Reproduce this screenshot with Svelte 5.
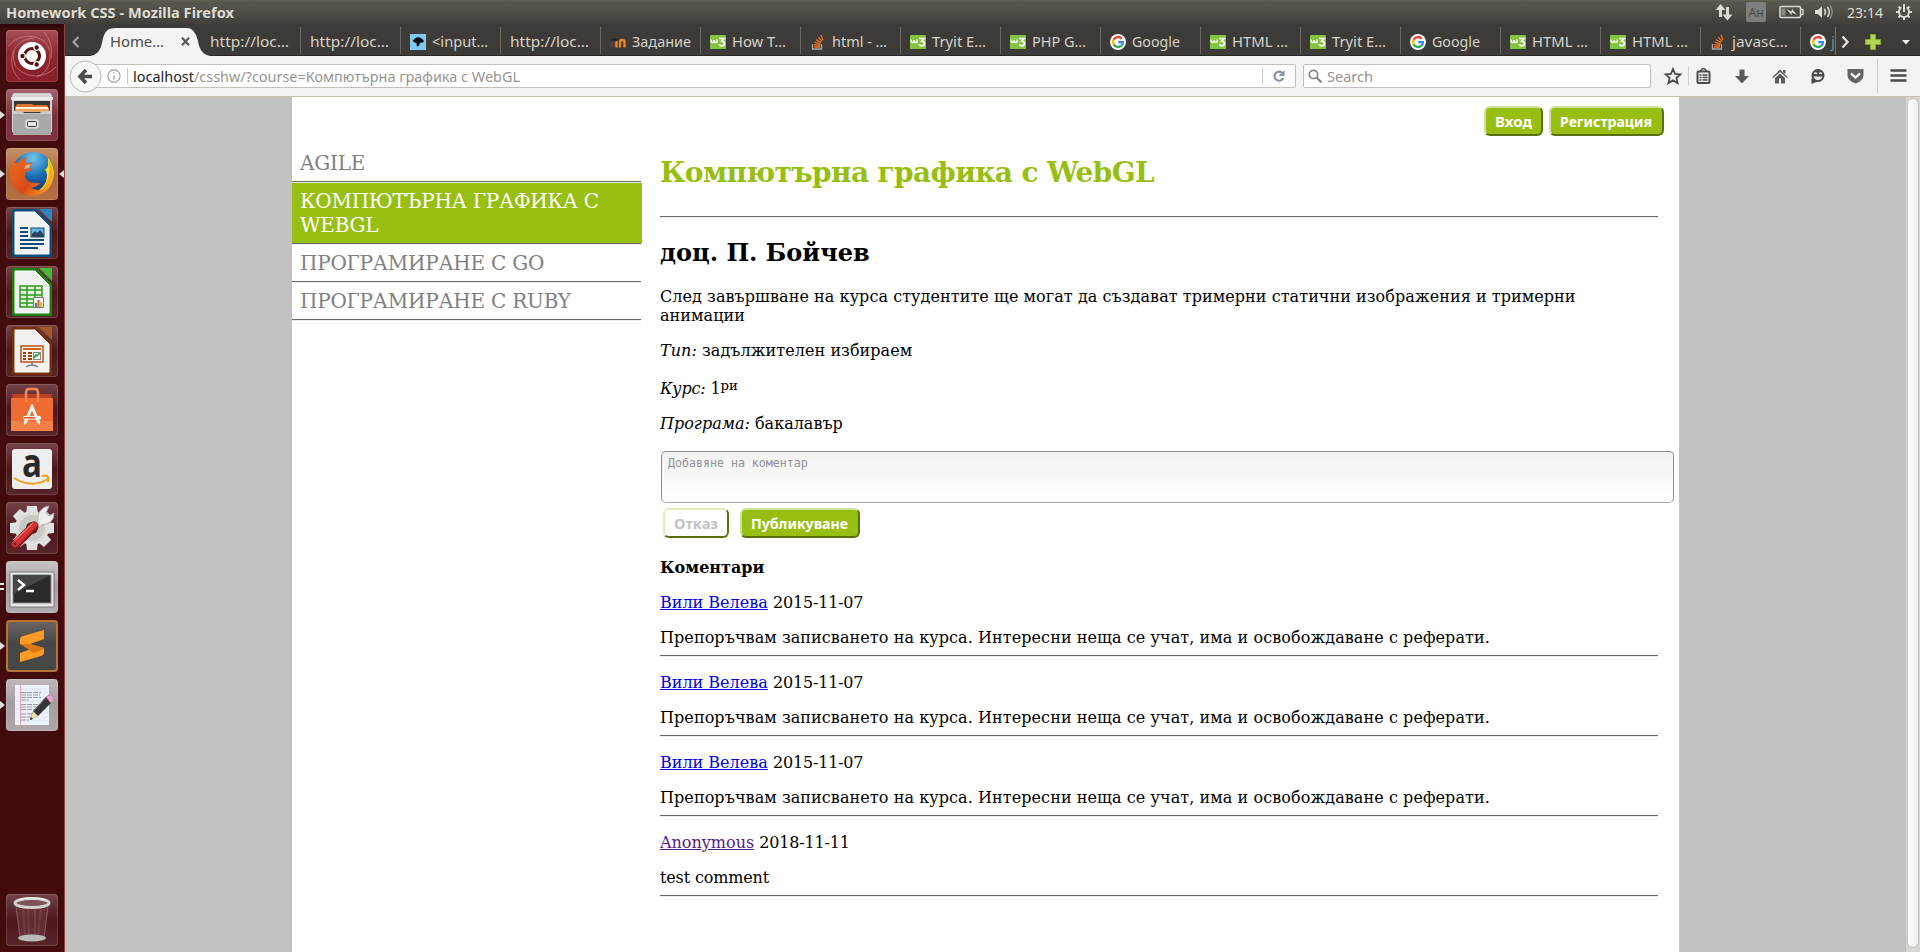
<script>
  const tabs = [
    { t: 'http://loc…', w: 79 },
    { t: 'http://loc…', w: 79 },
    { t: '<input…', w: 56, i: 'input' },
    { t: 'http://loc…', w: 79 },
    { t: 'Задание', w: 59, i: 'moodle' },
    { t: 'How T…', w: 54, i: 'w3' },
    { t: 'html - …', w: 55, i: 'so' },
    { t: 'Tryit E…', w: 54, i: 'w3' },
    { t: 'PHP G…', w: 54, i: 'w3' },
    { t: 'Google', w: 48, i: 'google' },
    { t: 'HTML …', w: 56, i: 'w3' },
    { t: 'Tryit E…', w: 54, i: 'w3' },
    { t: 'Google', w: 48, i: 'google' },
    { t: 'HTML …', w: 56, i: 'w3' },
    { t: 'HTML …', w: 56, i: 'w3' },
    { t: 'javasc…', w: 56, i: 'so' }
  ];
  const apps = [
    { n: 'dash', bg: 'linear-gradient(#a55259,#8d2730 45%,#8a2029)' },
    { n: 'files', bg: 'linear-gradient(#a5646f,#7b2f3c 50%,#7c3340)', left: true },
    { n: 'firefox', bg: 'linear-gradient(#c59368,#a9693c 50%,#b4703f)', left: true, right: true },
    { n: 'writer' },
    { n: 'calc' },
    { n: 'impress' },
    { n: 'software' },
    { n: 'amazon' },
    { n: 'settings' },
    { n: 'terminal', bg: 'linear-gradient(#c9c5c7,#a39c9f 50%,#b3aeb0)', double: true },
    { n: 'sublime', bg: 'linear-gradient(#6d6661,#474747 45%,#474747)', ring: true, left: true },
    { n: 'gedit', bg: 'linear-gradient(#beb6b8,#a59c9f 50%,#b0a8ab)', left: true }
  ];
  const comments = [
    { a: 'Вили Велева', d: '2015-11-07', t: 'Препоръчвам записването на курса. Интересни неща се учат, има и освобождаване с реферати.' },
    { a: 'Вили Велева', d: '2015-11-07', t: 'Препоръчвам записването на курса. Интересни неща се учат, има и освобождаване с реферати.' },
    { a: 'Вили Велева', d: '2015-11-07', t: 'Препоръчвам записването на курса. Интересни неща се учат, има и освобождаване с реферати.' },
    { a: 'Anonymous', d: '2018-11-11', t: 'test comment', visited: true }
  ];
  const teeth = [0, 45, 90, 135, 180, 225, 270, 315];
</script>

{#snippet label(text, w, color, weight = 400, size = 14.5)}
  <svg class="label" width={w} height="20"><text x="0" y="15" textLength={w} lengthAdjust="spacingAndGlyphs" fill={color} font-weight={weight} font-size={size}>{text}</text></svg>
{/snippet}

{#snippet favicon(i)}
  <svg class="fav" width="16" height="16" viewBox="0 0 16 16">
    {#if i === 'w3'}
      <rect y="1" width="16" height="14" rx="1" fill="#84c341" />
      <path d="M1.200 5.500v1.700q0 1.400 1.500 1.400T4.200 7.200V6v1.200q0 1.400 1.500 1.400T7.200 7.200V5.500" fill="none" stroke="#fff" stroke-width="1.500" />
      <path d="M9.300 4.500h4.700l-2.200 2.700q2.600.1 2.600 2.400 0 2.300-2.500 2.300-1.700 0-2.600-1.400" fill="none" stroke="#fff" stroke-width="1.700" />
    {:else if i === 'google'}
      <circle cx="8" cy="8" r="8" fill="#fff" />
      <g fill="none" stroke-width="2.300">
        <path d="M11.700 4.600A5 5 0 0 0 3.600 5.700" stroke="#ea4335" />
        <path d="M3.600 5.700a5 5 0 0 0 0 4.700" stroke="#fbbc05" />
        <path d="M3.600 10.400a5 5 0 0 0 7.700 1.300" stroke="#34a853" />
        <path d="M11.300 11.700A5 5 0 0 0 12.900 8.200H8.200" stroke="#4285f4" />
      </g>
    {:else if i === 'so'}
      <path d="M2.500 10v5h9v-5" fill="none" stroke="#a5a7a9" stroke-width="1.300" />
      <g stroke="#ee721c" stroke-width="1.300"><path d="M4 13h6M4.100 10.700l6 .8M4.800 8.200l5.600 1.900M6.200 5.600l4.900 3.200M8.300 3.200l3.700 4.300M10.900.8l2 5.300" /></g>
    {:else if i === 'moodle'}
      <path d="M1.500 13V8M4.700 13V8" stroke="#5b4a40" stroke-width="2" /><path d="M0 6l5-2 4 1-4 2z" fill="#222" />
      <path d="M6.500 13.500V7M10 13.500V8.300Q10 6 12.200 6t2.300 2.300v5.200" fill="none" stroke="#f0842a" stroke-width="2.300" />
    {:else}
      <rect width="16" height="16" fill="#80caf2" />
      <path d="M2.500 7L5 4.500Q7 2.800 10 3.500l3.500 2.500q.8 2.200-1 2.700H10l-1 3-2.300 1V9.500z" fill="#0a0a0a" />
    {/if}
  </svg>
{/snippet}

{#snippet app(n)}
  <svg width="52" height="52" viewBox="0 0 52 52">
    {#if n === 'dash'}
      <g fill="none" stroke="#d8999d" stroke-opacity=".55"><path d="M2 16Q14 3 30 7q16 5 14 22-1 13-13 18M50 37Q38 49 22 45 4 39 8 21M14 50Q2 38 7 22 13 8 29 8M38 2q10 12 7 27" /></g>
      <circle cx="26" cy="27" r="14" fill="#761b22" /><circle cx="26" cy="26" r="14" fill="#fff" />
      <circle cx="26" cy="26" r="7.500" fill="none" stroke="#541216" stroke-width="3" />
      <g fill="#541216" stroke="#fff" stroke-width="1.200"><circle cx="16.500" cy="26" r="2.800" /><circle cx="30.700" cy="17.500" r="2.800" /><circle cx="30.700" cy="34.500" r="2.800" /></g>
    {:else if n === 'files'}
      <path d="M6 8q0-4 3-4h34q3 0 3 4v35H6z" fill="#d4d4d4" /><path d="M5 8h42v3H5z" fill="#eee" />
      <path d="M8 12h36v12H8z" fill="#353638" /><path d="M9 18l2-3h15l1 1h14l2 3v4H9z" fill="#dc742a" /><path d="M10 18h32v2H10z" fill="#fff2dc" /><path d="M9 20h34v3H9z" fill="#f0a55c" />
      <path d="M7 22h9l2 2h16l2-2h9v24H7z" fill="#a9a9a9" /><path d="M7 22h9l2 2h16l2-2h9v3H7z" fill="#c9c9c9" />
      <rect x="19.500" y="30.500" width="13" height="9" rx="2" fill="#ddd" stroke="#c8c8c8" /><rect x="21.500" y="32.500" width="9" height="5" rx="1" fill="#e6e6e6" stroke="#333" />
    {:else if n === 'firefox'}
      <defs><radialGradient id="sea" cx=".5" cy=".15" r=".85"><stop stop-color="#72c7ee" /><stop offset=".5" stop-color="#1a6eb5" /><stop offset="1" stop-color="#112c67" /></radialGradient><linearGradient id="fox" x1="0" y1="0" x2="1" y2="1"><stop stop-color="#ee6d1f" /><stop offset=".6" stop-color="#db4b19" /><stop offset="1" stop-color="#f7a321" /></linearGradient></defs>
      <circle cx="27" cy="25" r="21" fill="url(#sea)" />
      <path d="M42 10q10 13 3 26-6 12-22 11 18-6 18-20 0-3-2-6 4 1 3-11z" fill="#fde21f" />
      <path d="M43 12q2 16-4 25-3 6-13 9 15 2 20-12 3-11-3-22z" fill="#f8a51d" />
      <path d="M8 12q-7 11-3 21 5 14 20 15 11 0 17-8-9 4-17 0 6-1 9-5-9 0-12-2-5-4-2-9l5-2-1-3 3-5q-5 1-8 2 0-4 2-7-5 1-8 5l-4 1 0-4q-2 1-1 1z" fill="url(#fox)" />
      <path d="M20 17l5-1-2 4-5 1z" fill="#efb286" />
    {:else if n === 'writer' || n === 'calc' || n === 'impress'}
      {@const c = n === 'writer' ? '#0b4d7d' : n === 'calc' ? '#18820d' : '#743205'}
      {@const d = n === 'writer' ? '#2d86c0' : n === 'calc' ? '#47bb37' : '#a35a23'}
      <path d="M8 2h22l16 16v32H8q-2 0-2-2V4q0-2 2-2z" fill={c} /><path d="M33 2h13v13z" fill={d} />
      <path d="M9 5h20l14 14v28H9z" fill="#f1f1f1" stroke="#fff" />
      {#if n === 'writer'}
        <path d="M14 21h8M14 25h8M14 29h8M14 33h24M14 37h24M14 41h18" stroke={c} stroke-width="2" /><rect x="25" y="21" width="13" height="9" fill="#68b7de" stroke={c} /><path d="M26 30v-3l3-3 2 2 3-3 4 5v2z" fill="#24455b" />
      {:else if n === 'calc'}
        <path d="M14 20h22v21H14z" fill="#dff2d8" stroke="#2c9c1d" stroke-width="1.500" /><path d="M21 20v21M29 20v21M14 24h22M14 29h22M14 33h22M14 37h22" stroke="#2c9c1d" stroke-width="1.500" /><path d="M27.500 31.500h10v10h-10z" fill="#fff" stroke="#777" /><path d="M29 41v-4h2v4z" fill="#2c7fc0" /><path d="M31.500 41v-7h2v7z" fill="#e35c12" /><path d="M34 41v-5h2v5z" fill="#f2b71a" />
      {:else}
        <rect x="15" y="21" width="22" height="16" fill="#fff5ec" stroke="#b85119" stroke-width="1.500" /><path d="M17 24h18" stroke="#d16326" stroke-width="2" /><path d="M17 28h3M17 31h3M17 34h3M22 28h4M22 31h4M22 34h4" stroke="#944010" stroke-width="2" /><rect x="27.500" y="27.500" width="7" height="7" fill="#fff" stroke="#888" /><path d="M28 33l2-3 1 1 3-3" fill="none" stroke="#1c9e42" stroke-width="1.500" /><path d="M26 37v3M20 42q6-4 12 0" stroke="#777" stroke-width="1.500" fill="none" />
      {/if}
    {:else if n === 'software'}
      <path d="M6 10h40l-1 5H7z" fill="#bd421e" /><path d="M5 14h42v33H5z" fill="#ef6b31" /><path d="M5 37h42v10H5z" fill="#f38147" /><path d="M20 18V9q0-4 3-4h6q3 0 3 4v9" stroke="#f2875c" stroke-width="2.500" fill="none" />
      <path d="M19 39l7-16 7 16M19 39h-1M33 39h1" stroke="#fff" stroke-width="3" fill="none" /><rect x="17" y="32" width="18" height="3.500" rx="1.500" fill="#fff" /><path d="M18 33.800h11" stroke="#e95420" stroke-width="1.500" />
    {:else if n === 'amazon'}
      <rect x="6" y="6" width="40" height="40" rx="3" fill="#eee" /><text x="16" y="33.500" textLength="20" lengthAdjust="spacingAndGlyphs" font-family="Open Sans, sans-serif" font-size="39" font-weight="700" fill="#292929">a</text><path d="M8 35q18 11 34 1M36 33q8-2 6 6" fill="none" stroke="#f79a1c" stroke-width="2" />
    {:else if n === 'settings'}
      {#each teeth as r}<path d="M21 4h10l1 9H20z" fill="#e0e0de" transform="rotate({r} 26 26)" />{/each}
      <circle cx="26" cy="26" r="17" fill="#dededb" /><circle cx="26" cy="26" r="13" fill="#c9c8c5" /><circle cx="26" cy="26" r="6" fill="#531b22" />
      <path d="M30 21l2-3q-1-9 7-13l4-1-3 7 3 3 5-3q0 11-12 12l-3 3z" fill="#eee" stroke="#aaa" /><path d="M9 43l19-19" stroke="#7b1718" stroke-width="9" stroke-linecap="round" /><path d="M9 42l19-19" stroke="#d43232" stroke-width="6.500" stroke-linecap="round" /><path d="M9 38l18-17" stroke="#ee6e6b" stroke-width="1.500" /><circle cx="9" cy="42" r="1.500" fill="#651515" />
    {:else if n === 'terminal'}
      <rect x="4" y="11" width="44" height="35" rx="1" fill="#e8e8e8" stroke="#777" /><rect x="7" y="14" width="38" height="28" fill="#292b2b" stroke="#888" /><path d="M7 14h38L7 33z" fill="#444747" /><path d="M12 19l6 5-6 5M20 30h8" fill="none" stroke="#fff" stroke-width="2.400" />
    {:else if n === 'sublime'}
      <path d="M14 19q0-2 3-3l21-6v9l-14 5 14 4v4q0 3-3 4l-21 6v-9l14-5-14-4z" fill="#ff9b25" /><path d="M14 24l10 0 14 4v1l-10 4z" fill="#dc7811" />
    {:else if n === 'gedit'}
      <path d="M9 6h34v40H9z" fill="#edf3fc" /><path d="M9 10h34M9 14h34M9 18h34M9 22h34M9 26h34M9 30h34M9 34h34M9 38h34M9 42h34" stroke="#dbe6f7" /><path d="M14.500 6v40" stroke="#e9a3a8" /><path d="M15 13.500h20M15 16h19M15 18.500h20M15 21h8M15 25.500h19M15 28h18M15 30.500h16M15 35h15M15 38h13M15 41h8" stroke="#999" stroke-dasharray="5 1" />
      <path d="M24 41l3-9 14-15 5 6-14 14z" fill="#343434" /><path d="M24 41l3-9 5 5z" fill="#e9e4a4" /><path d="M24 41l1-3 2 2z" fill="#222" /><path d="M28 32l12-14" stroke="#777" /><path d="M40 18l3-2q3-1 5 3l-1 4-2 1z" fill="#e8a6d1" stroke="#ae8899" />
    {:else}
      <path d="M9 9l5 36h24l5-36z" fill="#6e3a40" fill-opacity=".6" /><path d="M17 14l2 29M22 14l1 30M29 14v30M35 14l-3 30" stroke="#bd989a" stroke-opacity=".15" stroke-width="2" /><path d="M10 13l4 30M42 13l-4 30" stroke="#aa8588" stroke-opacity=".5" /><ellipse cx="26" cy="44" rx="14" ry="3.500" fill="#b6bab7" /><ellipse cx="26" cy="9" rx="17" ry="4.500" fill="#805257" stroke="#cfd1cd" stroke-width="3" /><path d="M12 6q13-4 28 0" stroke="#fff" fill="none" />
    {/if}
  </svg>
{/snippet}

<div class="desktop">
  <header class="panel">
    {@render label('Homework CSS - Mozilla Firefox', 228, '#dfdbd2', 700, 14.5)}
    <div class="tray">
      <svg width="18" height="18" viewBox="0 0 18 18"><path d="M5.500 14V5M12.500 4v10" stroke="#dfdbd2" stroke-width="3" /><path d="M.5 7l5-6 5 6zM7.500 11.500l5 6 5-6z" fill="#dfdbd2" /></svg>
      <span class="lang">Ан</span>
      <svg class="bat" width="25" height="14" viewBox="0 0 25 14"><rect x="1" y="1.500" width="20.500" height="11" rx="1" fill="none" stroke="#dfdbd2" stroke-width="1.500" /><path d="M22 4.500h2v5h-2" fill="none" stroke="#dfdbd2" stroke-width="1.300" /><path d="M2.500 3.500h4v7h-4z" fill="#8c8a81" /><path d="M7.500 4l5 2.500L13 4l5 6-5-2.500-.5 2.500z" fill="#dfdbd2" /></svg>
      <svg class="vol" width="21" height="18" viewBox="0 0 21 18"><path d="M2 7h3l4-4v12l-4-4H2z" fill="#dfdbd2" /><path d="M11.500 6q2 3 0 6M14.500 4q3.500 5 0 10" fill="none" stroke="#dfdbd2" stroke-width="1.500" /><path d="M17 2.500q4.500 6.500 0 13" fill="none" stroke="#8f8d84" stroke-width="1.400" /></svg>
      {@render label('23:14', 36, '#dfdbd2')}
      <svg class="gear" width="16" height="18" viewBox="0 0 16 18"><g stroke="#dfdbd2" stroke-width="2" fill="none"><circle cx="8" cy="9" r="5" /><path d="M8 14v3M0 9h3M13 9h3M2.500 3.500l2 2M13.500 3.500l-2 2M2.500 14.500l2-2M13.500 14.500l-2-2" /></g><path d="M8 0v8" stroke="#504f47" stroke-width="5" /><path d="M8 1v8" stroke="#dfdbd2" stroke-width="2" /></svg>
    </div>
  </header>

  <div class="workspace">
    <nav class="launcher">
      {#each apps as a}
        <div class="slot" class:left={a.left} class:right={a.right}>
          {#if a.double}<i class="pips"></i>{/if}
          <div class="tile" class:ring={a.ring} style:background={a.bg}>{@render app(a.n)}</div>
        </div>
      {/each}
      <div class="slot trash"><div class="tile">{@render app('trash')}</div></div>
    </nav>

    <div class="browser">
      <div class="tabs">
        <svg class="prev" width="8" height="12" viewBox="0 0 8 12"><path d="M6.500 1L1.500 6l5 5" fill="none" stroke="#aaa79e" stroke-width="2" /></svg>
        <div class="current">
          <svg class="shape" width="122" height="29" viewBox="0 0 122 29"><path d="M0 29Q10 28 12 16C14 4 18 1 25 1H97q8 0 11 13 2 14 13 15z" fill="#f4f3f1" /></svg>
          <div class="tabtext">{@render label('Home…', 54, '#4c4b47')}</div>
          <svg class="close" width="9" height="9" viewBox="0 0 9 9"><path d="M1 .8l7 7.400m0-7.400l-7 7.400" stroke="#5b5a55" stroke-width="2.300" /></svg>
        </div>
        {#each tabs as tab, k}
          <div class="tab" class:first={k === 0}>
            {#if tab.i}{@render favicon(tab.i)}{/if}
            {@render label(tab.t, tab.w, '#d6d2c9')}
          </div>
        {/each}
        <div class="tab clipped">{@render favicon('google')}{@render label('j', 4, '#6b8c91')}</div>
        <svg class="tabtools" width="83" height="30" viewBox="0 0 83 30"><path d="M-1.500 0v28" stroke="#77756d" /><path d="M5.500 9.500l5 5.500-5 5.500" fill="none" stroke="#e2dfd7" stroke-width="2.400" /><path d="M33.500 7.500h5v5h5v5h-5v5h-5v-5h-5v-5h5z" fill="#b3d455" stroke="#84a72c" /><path d="M65 13h8l-4 4.500z" fill="#f3f1ec" /></svg>
      </div>

      <div class="toolbar">
        <svg class="back" width="33" height="33" viewBox="0 0 33 33"><circle cx="16.500" cy="16.500" r="15.500" fill="#f8f7f6" stroke="#bbb7b1" /><path d="M11 16.500h12M17 10l-6 6.500 6 6.500" stroke="#4c4c4a" stroke-width="3.600" fill="none" /></svg>
        <div class="address">
          <svg width="14" height="14" viewBox="0 0 16 16"><circle cx="8" cy="8" r="7" stroke="#999" stroke-width="1.200" fill="none" /><path d="M8 7v5M8 4v1.500" stroke="#999" stroke-width="1.400" /></svg>
          <i class="bar"></i>
          <div class="url">{@render label('localhost', 61, '#24231f')}{@render label('/csshw/?course=Компютърна графика с WebGL', 326, '#97958f')}</div>
          <i class="bar wide"></i>
          <svg class="reload" width="14" height="14" viewBox="0 0 14 14"><path d="M11.200 9A4.500 4.500 0 1 1 10 3.800" fill="none" stroke="#8393a5" stroke-width="2.200" /><path d="M12.500 1v6H6.500z" fill="#8393a5" /></svg>
        </div>
        <div class="search">
          <svg width="15" height="15" viewBox="0 0 15 15"><circle cx="5.500" cy="5.500" r="4.200" fill="none" stroke="#898783" stroke-width="1.800" /><path d="M8.500 8.500l5 5" stroke="#898783" stroke-width="2.400" /></svg>
          {@render label('Search', 46, '#94928c')}
        </div>
        <svg class="tools" width="250" height="38" viewBox="0 0 250 38">
          <g fill="none" stroke="#4b4a47">
            <path d="M14 12l2.100 4.900 5.300.5-4 3.500 1.200 5.200L14 23.400l-4.600 2.700 1.200-5.200-4-3.500 5.300-.5z" stroke-width="1.800" />
            <rect x="38.500" y="14.500" width="12" height="11.500" rx="1" stroke-width="2" /><path d="M41.500 14q3-5 6 0M40.500 18h2M43.500 18h5M40.500 20.500h2M43.500 20.500h5M40.500 23h2M43.500 23h5" stroke-width="1.500" />
          </g>
          <path d="M29.500 10v18M218.500 2v34" stroke="#d3d0ca" />
          <path d="M80.500 12.500h5v6.500h4.500l-7 7.500-7-7.500h4.500zM113.500 20l7.500-7.500 7.500 7.500v1.500l-7.500-6.500-7.500 6.500zM116 21l5-4.500 5 4.500v5.500h-4v-5h-2v5h-4zM124 13h2.500v4l-2.500-2z" fill="#5b5a57" />
          <circle cx="159" cy="18.500" r="6.500" fill="#4b4a47" /><path d="M152.500 21v6l6-2.500z" fill="#4b4a47" /><path d="M154.500 19.500h9q-1 3.500-4.500 3.500t-4.500-3.500z" fill="#eee" /><path d="M155.300 16.800q1-2 2.500 0M160.300 16.800q1-2 2.500 0" stroke="#fff" stroke-width="1.300" fill="none" />
          <path d="M188.500 12h16v6.500q0 5-8 8-8-3-8-8z" fill="#666563" /><path d="M192 16.500l4.500 4 4.500-4" stroke="#fff" stroke-width="2.200" fill="none" />
          <path d="M231.500 13.500h16M231.500 18.500h16M231.500 23.500h16" stroke="#4b4a47" stroke-width="2.600" />
        </svg>
      </div>

      <div class="viewport">
        <div class="page">
          <aside>
            <div class="course">AGILE</div><hr />
            <div class="course active">КОМПЮТЪРНА ГРАФИКА С WEBGL</div><hr />
            <div class="course">ПРОГРАМИРАНЕ С GO</div><hr />
            <div class="course">ПРОГРАМИРАНЕ С RUBY</div><hr />
          </aside>
          <main>
            <div class="auth">
              <button style:width="59px">{@render label('Вход', 37, '#fff', 700, 14)}</button>
              <button style:width="115px">{@render label('Регистрация', 92, '#fff', 700, 14)}</button>
            </div>
            <h1>Компютърна графика с WebGL</h1>
            <hr />
            <h2>доц. П. Бойчев</h2>
            <p>След завършване на курса студентите ще могат да създават тримерни статични изображения и тримерни анимации</p>
            <p><i>Тип:</i> задължителен избираем</p>
            <p class="year"><i>Курс:</i> 1<sup>ри</sup></p>
            <p class="program"><i>Програма:</i> бакалавър</p>
            <div class="box">Добавяне на коментар</div>
            <div class="actions">
              <button class="cancel" style:width="66px">{@render label('Отказ', 44, '#c2c2c2', 700, 14)}</button>
              <button style:width="120px">{@render label('Публикуване', 97, '#fff', 700, 14)}</button>
            </div>
            <h4>Коментари</h4>
            {#each comments as c}
              <article><p><span class="author" class:visited={c.visited}>{c.a}</span> <span class="date">{c.d}</span></p><p class:latin={c.visited}>{c.t}</p><hr /></article>
            {/each}
          </main>
        </div>
        <div class="scroll"><div class="thumb"></div></div>
      </div>
    </div>
  </div>
</div>

<style>
  :global(body) { margin: 0; overflow: hidden; }
  .desktop { width: 1920px; height: 952px; display: flex; flex-direction: column; overflow: hidden; font: 16px/19px 'DejaVu Serif', serif; color: #000; }
  .desktop * { box-sizing: border-box; }
  svg { display: block; flex: none; overflow: visible; }
  .label { font-family: 'Noto Sans', 'Open Sans', sans-serif; }

  .panel { height: 24px; flex: none; display: flex; align-items: center; justify-content: space-between; padding: 0 8px 0 6px; background: linear-gradient(#65634f 0, #5b594f 1px, #403f3a 24px); }
  .panel > .label { margin-top: 1px; }
  .tray { display: flex; align-items: center; }
  .tray .label { margin: 1px 13px 0 13px; }
  .lang { width: 20px; height: 20px; margin: 0 13px 0 13px; border-radius: 2px; background: #7f7e7a; color: #4a4945; text-align: center; font: 12px/21px 'Noto Sans', sans-serif; }
  .vol { margin-left: 9px; }

  .workspace { flex: 1; min-height: 0; display: flex; }
  .launcher { width: 65px; flex: none; padding-top: 6px; display: flex; flex-direction: column; gap: 7px; background: linear-gradient(#2a0607 0, #420b0d 7px); border-right: 1px solid #8f3f47; }
  .slot { position: relative; height: 52px; padding-left: 6px; }
  .trash { margin-top: auto; margin-bottom: 6px; }
  .tile { width: 52px; height: 52px; border-radius: 4px; background: linear-gradient(#744247, #4c171b 50%, #572529); box-shadow: inset 0 0 0 1px rgba(255, 255, 255, .15); }
  .ring { box-shadow: inset 0 0 0 2px #b87332; }
  .left::before { content: ''; position: absolute; left: 0; top: 22px; border: 4px solid transparent; border-left: 5px solid #dedede; border-right: 0; }
  .right::after { content: ''; position: absolute; right: 0; top: 22px; border: 4px solid transparent; border-right: 5px solid #dedede; border-left: 0; }
  .pips { position: absolute; left: 0; top: 22px; width: 4px; height: 7px; border: solid #e8e8e8; border-width: 2.5px 0; }

  .browser { flex: 1; min-width: 0; display: flex; flex-direction: column; }
  .tabs { height: 32px; flex: none; display: flex; align-items: flex-start; padding-top: 3px; background: #3c3b37; box-shadow: inset 0 -1px #282724; }
  .prev { margin: 9px 0 0 7px; }
  .current { position: relative; width: 120px; height: 29px; padding-left: 30px; }
  .shape { position: absolute; left: 10px; top: 0; }
  .tabtext { position: relative; padding-top: 5px; }
  .close { position: absolute; left: 101px; top: 10px; }
  .tab { position: relative; width: 100px; flex: none; height: 27px; display: flex; align-items: center; gap: 6px; padding: 2px 0 0 9px; border-left: 1px solid #6a6861; }
  .tab.first { border-color: transparent; }
  .clipped { width: 34px; overflow: hidden; gap: 5px; }
  .tabtools { margin-left: auto; }

  .toolbar { height: 41px; flex: none; display: flex; align-items: center; background: #f4f3f1; border-bottom: 1px solid #c7c0b7; }
  .back { position: relative; z-index: 1; margin: 0 0 0 4px; }
  .address { width: 1210px; height: 24px; margin: 0 7px 0 -16px; padding: 0 9px 0 20px; display: flex; align-items: center; background: #fff; border: 1px solid #c3c0bb; border-radius: 2px; }
  .bar { width: 1px; height: 16px; margin: 0 5px 0 6px; background: #c9c7c3; }
  .wide { height: 16px; margin: 0 9px 0 auto; }
  .url { display: flex; padding-top: 1px; }
  .search { width: 348px; height: 24px; padding-left: 4px; display: flex; align-items: center; gap: 4px; background: #fff; border: 1px solid #c3c0bb; border-radius: 2px; }
  .search .label { margin-top: 1px; }
  .tools { margin-left: 8px; }

  .viewport { flex: 1; min-height: 0; display: flex; background: #c2c2c2; }
  .page { width: 1387px; margin-left: 227px; display: flex; background: #fff; }
  .scroll { width: 14px; margin-left: auto; background: #d9d6d2; padding: 1px; }
  .thumb { height: 850px; border: 1px solid #c4c0ba; border-radius: 7px; background: linear-gradient(90deg, #fff, #edebe9); }
  hr { margin: 0; height: 2px; border: 0; border-top: 1px solid #696969; border-bottom: 1px solid #ececec; }
  aside { width: 350px; padding-top: 48px; color: #808080; font-size: 20px; line-height: 24px; letter-spacing: -.23px; }
  aside hr { margin-right: 1px; }
  .course { padding: 6px 8px; }
  .active { color: #fff; background: #97bf12; }
  main { width: 1019px; margin-left: 18px; padding-right: 21px; }
  .auth { display: flex; justify-content: flex-end; gap: 6px; padding-top: 9px; margin-right: -6px; height: 59px; }
  button { height: 30px; padding: 2px 1px 0 0; display: flex; justify-content: center; align-items: center; background: #97bf12; border: 2px solid; border-color: #cfe295 #57720b #57720b #cfe295; border-radius: 6px; }
  h1 { margin: 0; height: 60px; color: #97bf12; font-size: 28px; line-height: 33px; letter-spacing: -.63px; }
  h2 { margin: 0; padding-top: 20px; height: 69px; font-size: 24px; line-height: 29px; }
  p { margin: 0 0 16px; letter-spacing: .06px; }
  .year { padding-top: 3px; letter-spacing: -.14px; }
  .program { letter-spacing: 0; }
  sup { font-size: 13.3px; line-height: 0; vertical-align: 4px; }
  .box { width: 1013px; height: 52px; margin: 18px 0 0 1px; padding: 2px 6px; border: 1px solid #8d8d8d; border-bottom-color: #aaa; border-radius: 5px; background: linear-gradient(#f2f2f2, #fff); color: #919191; font: 11.62px/18px 'DejaVu Sans Mono', monospace; }
  .actions { display: flex; gap: 11px; padding: 5px 0 20px 3px; }
  .cancel { background: #fff; border-color: #e0ebba #56710a #56710a #e0ebba; }
  h4 { margin: 0 0 16px; font-size: 16px; line-height: 19px; }
  article { height: 80px; }
  article p:nth-child(2) { margin-bottom: 8px; letter-spacing: .075px; }
  article p.latin:nth-child(2) { letter-spacing: -.15px; }
  .author { color: #0000ee; text-decoration: underline; letter-spacing: 0; }
  .date { letter-spacing: -.18px; }
  .visited { color: #551a8b; }
</style>
